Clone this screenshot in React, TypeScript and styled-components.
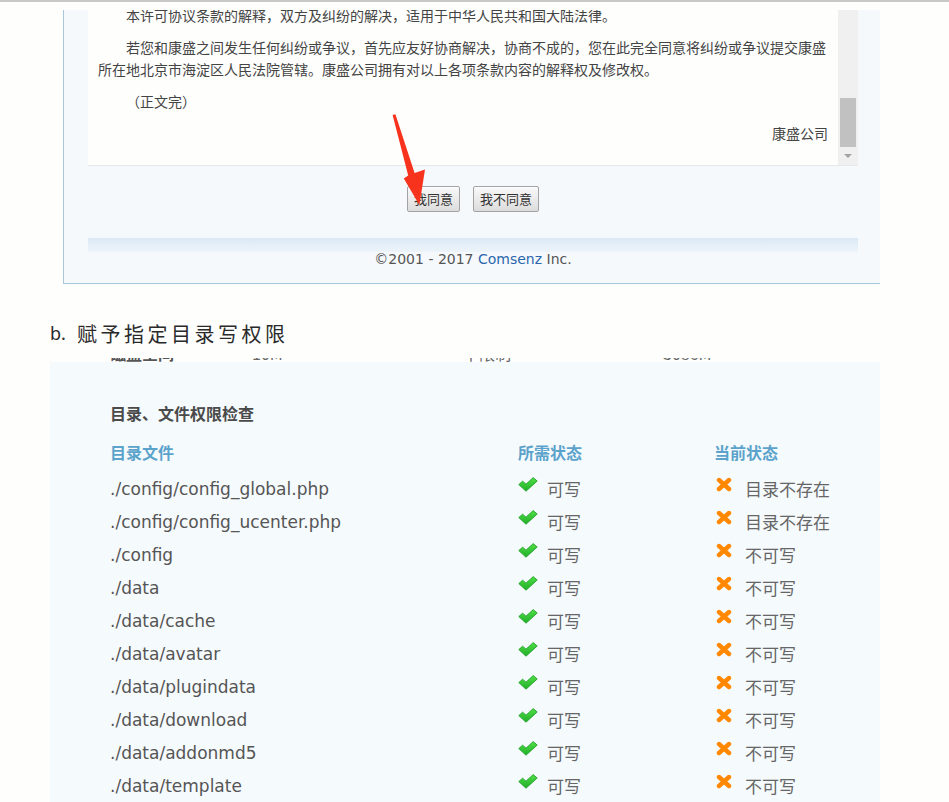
import React from "react";
import styled, { createGlobalStyle } from "styled-components";

const GlobalStyle = createGlobalStyle`
  *, *::before, *::after { box-sizing: border-box; }
  html, body { margin: 0; padding: 0; background: #fefefd; }
  body {
    font-family: "Noto Sans CJK SC", "Noto Sans", sans-serif;
    width: 949px;
    height: 802px;
    overflow: hidden;
  }
`;

const Page = styled.div`
  width: 949px;
  height: 802px;
  overflow: hidden;
  display: flex;
  flex-direction: column;
`;

const TopRule = styled.div`
  flex: none;
  height: 2px;
  background: #c9c9c9;
`;

/* ---------- first screenshot: licence agreement ---------- */

const LicensePanel = styled.section`
  position: relative;
  flex: none;
  margin: 8px 0 0 63px;
  width: 817px;
  background: #f5f9fc;
  border-left: 1px solid #a9c6da;
  border-bottom: 1px solid #a9c6da;
  padding: 0 22px 17px 24px;
  display: flex;
  flex-direction: column;
`;

const TextBox = styled.div`
  height: 156px;
  display: flex;
  background: #fefefd;
  border-bottom: 1px solid #e6e8ea;
`;

const TextContent = styled.div`
  flex: 1;
  overflow: hidden;
  display: flex;
  flex-direction: column;
  justify-content: flex-end;
  padding: 0 10px 21px 10px;
`;

const Para = styled.p<{ $right?: boolean }>`
  margin: 10px 0 0;
  font-size: 14px;
  line-height: 22px;
  color: #444;
  text-indent: ${(p) => (p.$right ? "0" : "28px")};
  text-align: ${(p) => (p.$right ? "right" : "left")};
`;

const Scrollbar = styled.div`
  flex: none;
  width: 20px;
  background: #f0f0f0;
  display: flex;
  flex-direction: column;
  align-items: center;
`;

const Thumb = styled.div`
  margin-top: 88px;
  width: 16px;
  height: 49px;
  background: #c1c1c1;
`;

const DownArrow = styled.div`
  margin-top: 7px;
  width: 0;
  height: 0;
  border-left: 4px solid transparent;
  border-right: 4px solid transparent;
  border-top: 4px solid #a3a3a3;
`;

const ButtonRow = styled.div`
  margin-top: 20px;
  display: flex;
  justify-content: center;
  gap: 13px;
`;

const PlainButton = styled.button`
  height: 26px;
  padding: 0 6px;
  font-family: "Noto Sans CJK SC", sans-serif;
  font-size: 13px;
  line-height: 24px;
  color: #333;
  border: 1px solid #a3a3a3;
  border-radius: 2px;
  background: linear-gradient(to bottom, #f9f9f9, #dcdcdc);
  box-shadow: inset 0 1px 0 #ffffff;
`;

const FooterBar = styled.div`
  margin-top: 26px;
  height: 14px;
  background: linear-gradient(to bottom, #dbe9f5, #edf4fa);
`;

const Copyright = styled.div`
  font-family: "DejaVu Sans", "Noto Sans", sans-serif;
  font-size: 14px;
  line-height: 14px;
  color: #555;
  text-align: center;
`;

const Brand = styled.span`
  color: #2a67ad;
`;

const ArrowOverlay = styled.svg`
  position: absolute;
  left: 316px;
  top: 96px;
  width: 50px;
  height: 110px;
  overflow: visible;
`;

/* ---------- heading between screenshots ---------- */

const StepHeading = styled.h3`
  flex: none;
  margin: 37px 0 0 50px;
  height: 24px;
  display: flex;
  align-items: center;
  font-weight: 400;
  color: #2a2a2a;
`;

const StepMarker = styled.span`
  font-family: "Noto Sans", sans-serif;
  font-size: 18px;
  margin-right: 11px;
`;

const StepLabel = styled.span`
  font-family: "Noto Sans CJK SC", sans-serif;
  font-size: 20px;
  letter-spacing: 3.5px;
`;

/* ---------- second screenshot: permission check ---------- */

const CroppedRow = styled.div`
  flex: none;
  margin: 13px 0 0 50px;
  width: 830px;
  height: 4px;
  overflow: hidden;
  display: flex;
  flex-direction: column;
  justify-content: flex-end;
`;

const EnvRow = styled.div`
  flex: none;
  display: grid;
  grid-template-columns: 142px 211px 200px 1fr;
  padding-left: 60px;
  font-size: 16px;
  line-height: 17px;
  color: #666;
`;

const EnvName = styled.span`
  font-weight: 700;
  color: #555;
`;

const CheckPanel = styled.section`
  flex: 1;
  margin-left: 50px;
  width: 830px;
  background: #f5fafd;
  padding: 39px 0 0 60px;
`;

const SectionTitle = styled.div`
  font-size: 16px;
  line-height: 24px;
  font-weight: 700;
  color: #4a4a4a;
  margin-bottom: 10px;
`;

const Row = styled.div<{ $head?: boolean }>`
  display: grid;
  grid-template-columns: 408px 196px 1fr;
  height: 33px;
  align-items: center;
  margin-bottom: ${(p) => (p.$head ? "4px" : "0")};
`;

const HeadCell = styled.div`
  font-size: 16px;
  line-height: 20px;
  font-weight: 700;
  color: #5ba3cb;
`;

const PathCell = styled.div`
  font-family: "DejaVu Sans", "Noto Sans CJK SC", sans-serif;
  font-size: 17px;
  line-height: 20px;
  color: #555;
`;

const StatusCell = styled.div`
  display: flex;
  align-items: center;
  gap: 9px;
  font-size: 17px;
  line-height: 20px;
  color: #666;
`;

const IconBox = styled.span<{ $offset: number }>`
  display: flex;
  width: 20px;
  height: 15px;
  margin-left: ${(p) => p.$offset}px;
  margin-bottom: 8px;
`;

const CheckIcon = () => (
  <IconBox $offset={0}>
    <svg width="20" height="15" viewBox="0 0 20 15">
      <defs>
        <linearGradient id="chk" x1="0" y1="0" x2="0" y2="1">
          <stop offset="0" stopColor="#4fe046" />
          <stop offset="1" stopColor="#20ae28" />
        </linearGradient>
      </defs>
      <path
        d="M0.8 7.6 L4.6 4.2 L8 7.2 L15.2 0.6 L19.2 4 L8 14.2 Z"
        fill="url(#chk)"
        stroke="#24a02a"
        strokeWidth="0.9"
        strokeLinejoin="round"
      />
    </svg>
  </IconBox>
);

const CrossIcon = () => (
  <IconBox $offset={2}>
    <svg width="16" height="15" viewBox="0 0 16 15">
      <path
        d="M3 3 L13 12 M13 3 L3 12"
        stroke="#ff8800"
        strokeWidth="4.4"
        strokeLinecap="round"
      />
    </svg>
  </IconBox>
);

type Item = { path: string; current: string };

const items: Item[] = [
  { path: "./config/config_global.php", current: "目录不存在" },
  { path: "./config/config_ucenter.php", current: "目录不存在" },
  { path: "./config", current: "不可写" },
  { path: "./data", current: "不可写" },
  { path: "./data/cache", current: "不可写" },
  { path: "./data/avatar", current: "不可写" },
  { path: "./data/plugindata", current: "不可写" },
  { path: "./data/download", current: "不可写" },
  { path: "./data/addonmd5", current: "不可写" },
  { path: "./data/template", current: "不可写" },
];

export default function App() {
  return (
    <Page>
      <GlobalStyle />
      <TopRule />

      <LicensePanel>
        <TextBox>
          <TextContent>
            <Para>本许可协议条款的解释，双方及纠纷的解决，适用于中华人民共和国大陆法律。</Para>
            <Para>
              若您和康盛之间发生任何纠纷或争议，首先应友好协商解决，协商不成的，您在此完全同意将纠纷或争议提交康盛所在地北京市海淀区人民法院管辖。康盛公司拥有对以上各项条款内容的解释权及修改权。
            </Para>
            <Para>（正文完）</Para>
            <Para $right>康盛公司</Para>
          </TextContent>
          <Scrollbar>
            <Thumb />
            <DownArrow />
          </Scrollbar>
        </TextBox>

        <ButtonRow>
          <PlainButton>我同意</PlainButton>
          <PlainButton>我不同意</PlainButton>
        </ButtonRow>

        <FooterBar />
        <Copyright>
          ©2001 - 2017 <Brand>Comsenz</Brand> Inc.
        </Copyright>

        <ArrowOverlay viewBox="380 106 50 110">
          <polygon
            points="392.6,115 395.4,114.2 414.6,173 425,169.6 419.4,205 403.8,178.6 408.2,175.4"
            fill="#f8331d"
          />
        </ArrowOverlay>
      </LicensePanel>

      <StepHeading>
        <StepMarker>b.</StepMarker>
        <StepLabel>赋予指定目录写权限</StepLabel>
      </StepHeading>

      <CroppedRow>
        <EnvRow>
          <EnvName>磁盘空间</EnvName>
          <span>10M</span>
          <span>不限制</span>
          <span>3086M</span>
        </EnvRow>
      </CroppedRow>

      <CheckPanel>
        <SectionTitle>目录、文件权限检查</SectionTitle>
        <Row $head>
          <HeadCell>目录文件</HeadCell>
          <HeadCell>所需状态</HeadCell>
          <HeadCell>当前状态</HeadCell>
        </Row>
        {items.map((it) => (
          <Row key={it.path}>
            <PathCell>{it.path}</PathCell>
            <StatusCell>
              <CheckIcon />
              <span>可写</span>
            </StatusCell>
            <StatusCell>
              <CrossIcon />
              <span>{it.current}</span>
            </StatusCell>
          </Row>
        ))}
      </CheckPanel>
    </Page>
  );
}
